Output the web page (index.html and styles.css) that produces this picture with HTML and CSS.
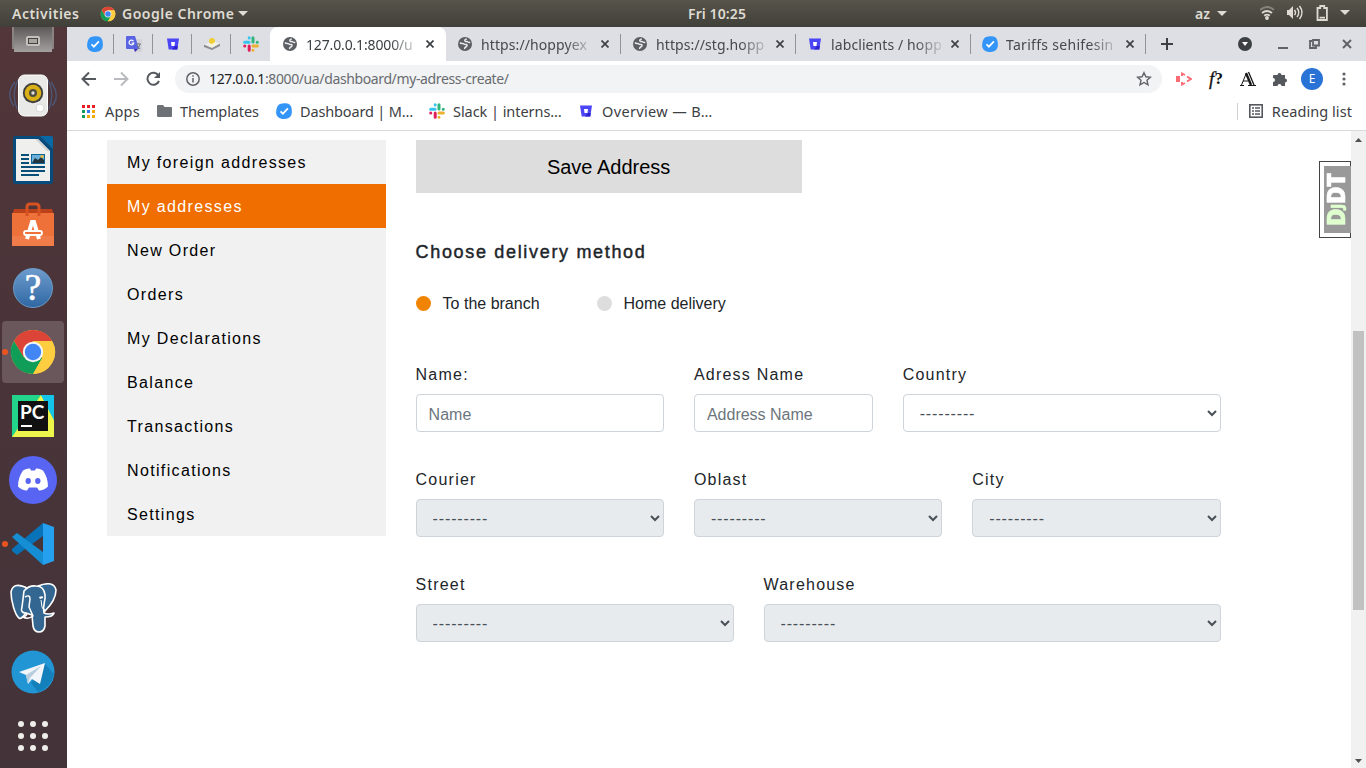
FILE: index.html
```html
<!DOCTYPE html>
<html lang="en">
<head>
<meta charset="utf-8">
<title>My addresses</title>
<link rel="stylesheet" href="styles.css">
</head>
<body>
<svg class="defs" width="0" height="0">
  <symbol id="globe" viewBox="0 0 14 14"><circle cx="7" cy="7" r="7" fill="#5b5e63"/><path d="M2 5.500c1.200 2 2.700.3 3.900 1.500.7.800 1.500.6 2.500.5 1 0 .8 2-.6 2.500-.8.300-.8 1.300-1.800 1.500M8.800 2c-2 .2-2.500 1.200-1.600 2.200.8.800 2 0 2.800.8.800.6 1.300.6 2.200.3" fill="none" stroke="#e9eaed" stroke-width="1.500"/></symbol>
  <symbol id="check" viewBox="0 0 16 16"><path d="M4 .9C7 .2 11 0 13.500 1.400 15.800 3 16 7 15.800 10c-.4 3.600-3 5.800-7.300 6C4 16 .8 14.200.2 10.500-.2 7 1 2 4 .9Z" fill="#3395f7"/><path d="m4.500 8.300 2.400 2.400 5-5.300" fill="none" stroke="#fff" stroke-width="1.700"/></symbol>
  <symbol id="bucket" viewBox="0 0 12 12"><path d="M0 .5h12l-1.700 11H1.700Z" fill="#4b45f5"/><path d="M8 8h2.800l-.5 3.500H5Z" fill="#2d20d0"/><path d="M4 4h4l-.5 4h-3Z" fill="#fff"/></symbol>
  <symbol id="slack" viewBox="0 0 16 16"><g fill="none" stroke-width="3" stroke-linecap="round"><path d="M1.700 6.200h4.300" stroke="#36c5f0"/><path d="M6.200 1.700v.3" stroke="#36c5f0"/><path d="M10 1.700v4.300M14.200 6.200h.1" stroke="#2eb67d"/><path d="M10 9.900h4.400M10 14.200v.1" stroke="#ecb22e"/><path d="M6.200 9.900v4.400M1.700 10h.1" stroke="#e01e5a"/></g></symbol>
  <symbol id="close" viewBox="0 0 8 8"><path d="m.5.500 7 7m0-7-7 7" stroke="#3c4043" stroke-width="1.700"/></symbol>
  <symbol id="chrome" viewBox="0 0 48 48"><circle cx="24" cy="24" r="22" fill="#fbc735"/><path d="M4.900 13A22 22 0 0 1 43.100 13H24L14.500 29Z" fill="#db4437"/><path d="M4.900 13A22 22 0 0 0 24 46L33.500 29.500 14.500 29Z" fill="#0f9d58"/><path d="M24 13h19.100A22 22 0 0 1 24 46l9.500-16.500Z" fill="#ffcd40"/><circle cx="24" cy="24" r="10.200" fill="#f5f5f5"/><circle cx="24" cy="24" r="8.200" fill="#4285f4"/></symbol>
</svg>

<header class="topbar">
  <span class="activities">Activities</span>
  <svg class="app-icon" width="16" height="16"><use href="#chrome"/></svg>
  <span class="app-name">Google Chrome</span>
  <svg width="10" height="6"><path d="M0 0h10L5 5Z" fill="#dfdbd2"/></svg>
  <span class="clock">Fri 10:25</span>
  <span class="lang">az</span>
  <svg class="lang-arrow" width="10" height="6"><path d="M0 0h10L5 5Z" fill="#dfdbd2"/></svg>
  <svg class="status" width="90" height="18" fill="none" stroke="#dfdbd2" stroke-width="1.800"><path d="M0 6q7-6 14 0" stroke="#858279"/><path d="M2 9q5-4 10 0M4.200 11.700q2.800-2 5.600 0"/><circle cx="7" cy="14" r="1" fill="#dfdbd2"/><path d="M27 6h2l4-4v13l-4-4h-2Z" fill="#dfdbd2" stroke="none"/><path d="M34.500 6q2 2.500 0 5M37 4q3.500 4.500 0 9M39.500 2q5 6.500 0 13" stroke-width="1.500"/><path d="M57.500 4h2.700V2h4v2h2.700v12h-9.400ZM59.500 13.600h5.500"/><path d="M80 6h10l-5 5Z" fill="#dfdbd2" stroke="none"/></svg>
</header>

<div class="desktop">
<aside class="dock">
  <div class="slot first"><svg width="44" height="26"><defs><linearGradient id="drawer" x2="0" y2="1"><stop stop-color="#5e5959"/><stop offset="1" stop-color="#a5a0a0"/></linearGradient></defs><path d="M1 0h42v22H1Z" fill="#8b8382"/><path d="M3 0h38v25H3Z" fill="url(#drawer)"/><rect x="15" y="9" width="14" height="10" rx="2" fill="#c4c1bd"/><rect x="17.500" y="11.500" width="9" height="5" fill="#a8a4a0" stroke="#454242"/></svg></div>
  <div class="slot"><svg width="50" height="48" viewBox="0 0 50 48"><path d="M7 10Q-3 22 6 34M43 10q10 14 1 24M10 8Q3 22 9 37M40 8q7 14 1 29" fill="none" stroke="#4c587a" stroke-width="1.300"/><rect x="10.500" y="3" width="29" height="41" rx="6" fill="#e9e9e7" stroke="#fff"/><circle cx="25" cy="21" r="10.200" fill="#3f3f3e"/><circle cx="25" cy="21" r="8.300" fill="#d9b016"/><circle cx="25" cy="21" r="4" fill="#514d3d"/><circle cx="25" cy="21" r="1.700" fill="#ddd"/><circle cx="32" cy="36" r="4" fill="#fff" stroke="#d8d8d8"/></svg></div>
  <div class="slot"><svg width="40" height="48" viewBox="0 0 40 48"><path d="M3 0h24l13 13v32q0 3-3 3H3q-3 0-3-3V3q0-3 3-3Z" fill="#074b7d"/><path d="M27 0h11q2 0 2 2v11Z" fill="#0769a5"/><path d="M3 3h22l12 12v30H3Z" fill="#efefed"/><path d="M25 3v0l12 12h-3L22 3Z" fill="#d2d2d0"/><rect x="18" y="18" width="14" height="10" fill="#0f6598"/><rect x="19" y="19" width="12" height="8" fill="#6bb0d8"/><path d="m19 27 3-5 3 2 3-3 3 3v3Z" fill="#24343c"/><circle cx="29" cy="20.500" r="1.600" fill="#e9b83b"/><path d="M8 19h8M8 23h8M8 27h8M8 31h24M8 35h24M8 39h18" stroke="#085078" stroke-width="2"/></svg></div>
  <div class="slot"><svg width="42" height="46" viewBox="0 0 42 46"><path d="M2 8h38l2 7H0Z" fill="#bb411a"/><path d="M0 12h42v33H0Z" fill="#ed7139"/><path d="M0 35h42v10H0Z" fill="#f07c49"/><path d="M15 15V6q0-3 3-3h6q3 0 3 3v9" fill="none" stroke="#d75220" stroke-width="3"/><path d="m15 38 5-17h2l5 17" fill="none" stroke="#fff" stroke-width="4"/><rect x="12" y="30" width="18" height="4" rx="2" fill="#ed7139" stroke="#fff" stroke-width="1.800"/></svg></div>
  <div class="slot"><div class="help">?</div></div>
  <div class="slot active"><i class="dot"></i><svg width="48" height="48"><use href="#chrome"/></svg></div>
  <div class="slot"><div class="pycharm"><svg class="pc-bg" width="42" height="42"><path d="M0 0h42v42H0Z" fill="#22d58b"/><path d="M0 42 29 0l13 25v17Z" fill="#eef64c"/><path d="M29 0h13v25Z" fill="#15c5e9"/></svg><div class="pc-box">PC<i></i></div></div></div>
  <div class="slot"><svg width="48" height="48" viewBox="0 0 48 48"><circle cx="24" cy="24" r="24" fill="#5865f2"/><path d="M14 14.500q4-2.500 7-2l1 2h4l1-2q3-.5 7 2 5 7 5 16-4 4-9 4l-2-3h-8l-2 3q-5 0-9-4 0-9 5-16Z" fill="#fff"/><ellipse cx="19.200" cy="25" rx="2.700" ry="3" fill="#5865f2"/><ellipse cx="28.800" cy="25" rx="2.700" ry="3" fill="#5865f2"/></svg></div>
  <div class="slot"><i class="dot"></i><svg width="42" height="42" viewBox="0 0 42 42"><path d="M31 0v13L5 32 0 28v-2Z" fill="#0873b8"/><path d="m0 14 5-4 26 19v13Z" fill="#168ed3"/><path d="m31 0 11 4v34l-11 4Z" fill="#25a0ee"/></svg></div>
  <div class="slot"><svg width="48" height="50" viewBox="0 0 48 50"><g fill="#336791" stroke="#fff" stroke-width="1.600" stroke-linejoin="round"><path d="M16 4Q4-1 2 9c0 9 4 23 8 26 3 2 5-3 7-5l3-23Z"/><path d="M29 3Q45-3 47 7c0 8-6 16-11 21-4-3-5-18-7-25Z"/><path d="M15 8Q20 2 27 3q8 0 9 9c1 6-3 10-1 18q4 2 10 0c-1 4-6 4-9 4v9q-1 6-6 6t-6-6l-1-11-6-2q-6 0-4-6Z"/></g><path d="M16 14q5-3 5 2l-1 8 4 9q-5 4-10 1 4-1 4-4" fill="none" stroke="#fff" stroke-width="1.500"/><path d="M30 14q5-2 4 1l-3 1Z" fill="#fff"/><path d="M32 17q0 8 4 12" fill="none" stroke="#fff"/></svg></div>
  <div class="slot"><svg width="44" height="44" viewBox="0 0 44 44"><circle cx="22" cy="22" r="21.500" fill="#2296d5"/><path d="m20 33 14-19 9 10q-3 14-16 18Z" fill="#1480bb"/><path d="m8 22 26-9-5 21-8-5-4 5-2-9Z" fill="#f2f6fa"/><path d="m15 25 15-9-11 12-2 6Z" fill="#b7cddd"/></svg></div>
  <div class="slot"><svg width="32" height="32" fill="#efeeea"><circle cx="4" cy="4" r="3"/><circle cx="16" cy="4" r="3"/><circle cx="28" cy="4" r="3"/><circle cx="4" cy="16" r="3"/><circle cx="16" cy="16" r="3"/><circle cx="28" cy="16" r="3"/><circle cx="4" cy="28" r="3"/><circle cx="16" cy="28" r="3"/><circle cx="28" cy="28" r="3"/></svg></div>
</aside>

<div class="browser">
  <nav class="tabs">
    <div class="pin"><svg width="16" height="16"><use href="#check"/></svg></div>
    <div class="pin"><svg width="16" height="16"><path d="M6 3h10v13H9Z" fill="#d4d4d8"/><path d="M1 0h8l4 13H1Q0 13 0 12V1Q0 0 1 0Z" fill="#5964e3"/><path d="M7.500 5.200A2.400 2.400 0 1 0 7.800 7H5.500" fill="none" stroke="#fff" stroke-width="1.200"/><path d="M10 8h5m-3-1v1m2 0q-1 4-3 5m0-4 3 4" fill="none" stroke="#757b85"/><path d="M8 13h4l-3 3Z" fill="#3d28b5"/></svg></div>
    <div class="pin"><svg width="12" height="12"><use href="#bucket"/></svg></div>
    <div class="pin"><svg width="16" height="14"><path d="m0 8 8-3 8 2v2l-8 4-8-3Z" fill="#8d8d92"/><path d="m0 7.500 8-3 8 2-8 4.500Z" fill="#efefef"/><circle cx="8" cy="4" r="3" fill="#efce31"/><path d="m5 9 6-4 2 1-6 4Z" fill="#fbf6cf"/></svg></div>
    <div class="pin last"><svg width="16" height="16"><use href="#slack"/></svg></div>
    <div class="tab current"><svg width="14" height="14"><use href="#globe"/></svg><span class="title">127.0.0.1:8000/u</span><svg width="8" height="8"><use href="#close"/></svg></div>
    <div class="tab"><svg width="14" height="14"><use href="#globe"/></svg><span class="title">https://hoppyex</span><svg width="8" height="8"><use href="#close"/></svg></div>
    <div class="tab"><svg width="14" height="14"><use href="#globe"/></svg><span class="title">https://stg.hopp</span><svg width="8" height="8"><use href="#close"/></svg></div>
    <div class="tab"><svg class="small" width="12" height="12"><use href="#bucket"/></svg><span class="title">labclients / hopp</span><svg width="8" height="8"><use href="#close"/></svg></div>
    <div class="tab tariff"><svg class="big" width="16" height="16"><use href="#check"/></svg><span class="title">Tariffs sehifesin</span><svg width="8" height="8"><use href="#close"/></svg></div>
    <svg class="plus" width="12" height="12"><path d="M6 0v12M0 6h12" stroke="#3c4043" stroke-width="2"/></svg>
    <svg class="window-ctl" width="116" height="16"><circle cx="7" cy="8" r="7" fill="#3c4043"/><path d="M4 6h6l-3 4Z" fill="#fff"/><path d="M40 12h10" stroke="#5f6368" stroke-width="2"/><path d="M74 5h-2v7h6v-1.500M75 4h6v5.500h-6Z" fill="none" stroke="#5f6368" stroke-width="1.800"/><path d="m105 4 8 8m0-8-8 8" stroke="#5f6368" stroke-width="2"/></svg>
  </nav>

  <div class="toolbar">
    <svg class="navs" width="82" height="18" fill="none" stroke="#55585d" stroke-width="2"><path d="M15 9H2m6-6.500L1.500 9 8 15.500"/><path d="M33 9h13m-6-6.500L46.500 9 40 15.500" stroke="#b8babd"/><path d="M77.500 5.500A6 6 0 1 0 78 11"/><path d="M79 2v6h-6Z" fill="#55585d" stroke="none"/></svg>
    <div class="omnibox">
      <svg width="14" height="14" fill="none" stroke="#5f6368" stroke-width="1.500"><circle cx="7" cy="7" r="6.200"/><path d="M7 6v4.500M7 3.200v1.500"/></svg>
      <span class="url"><b>127.0.0.1</b>:8000/ua/dashboard/my-adress-create/</span>
      <svg width="16" height="16" viewBox="0 0 16 16"><path d="m8 1.700 1.900 4.100 4.500.5-3.400 3 1 4.500-4-2.300-4 2.300 1-4.500-3.400-3 4.500-.5Z" fill="none" stroke="#5f6368" stroke-width="1.400"/></svg>
    </div>
    <div class="ext"><svg width="16" height="14"><path d="M0 4h4v6H0Z" fill="#fa6b73"/><path d="M6 4V1.500L9 3M11 4.500 15 7l-4 2.500M9 11l-3 1.500V10" fill="none" stroke="#fa6b73" stroke-width="1.900"/></svg></div>
    <div class="ext fq"><i>f</i>?</div>
    <div class="ext"><svg width="16" height="16" fill="none" stroke="#181818"><path d="M1.500 14 6 3M3 10h5" stroke-width="1"/><path d="m6 2 5 12" stroke-width="2.400"/><path d="m8.500 1 5.500 13" stroke-width="1.300"/><path d="M0 14.500h4m4 0h8" stroke-width="1"/></svg></div>
    <div class="ext"><svg width="16" height="16" fill="#55585d"><path d="M2 4h3.500a2 2 0 1 1 4 0H13v3.500a2 2 0 1 1 0 4V15H9.500a2 2 0 0 0-4 0H1v-4a2 2 0 0 0 0-4V5q0-1 1-1Z"/></svg></div>
    <div class="ext"><span class="avatar">E</span></div>
    <div class="ext"><svg width="4" height="14" fill="#5f6368"><circle cx="2" cy="2" r="1.600"/><circle cx="2" cy="7" r="1.600"/><circle cx="2" cy="12" r="1.600"/></svg></div>
  </div>

  <div class="bookmarks">
    <svg class="apps-icon" width="13" height="13"><path d="M0 0h3v3H0ZM5 0h3v3H5ZM10 0h3v3h-3Z" fill="#ea1c24"/><path d="M0 5h3v3H0ZM0 10h3v3H0Z" fill="#0f9d58"/><path d="M5 5h3v3H5Z" fill="#3978f0"/><path d="M10 5h3v3h-3ZM5 10h3v3H5ZM10 10h3v3h-3Z" fill="#f4a80c"/></svg>
    <span class="bm apps">Apps</span>
    <svg class="folder" width="15" height="12"><path d="M1 0h5l1.500 2H14q1 0 1 1v8q0 1-1 1H1q-1 0-1-1V1q0-1 1-1Z" fill="#6e7175"/></svg>
    <span class="bm templates">Themplates</span>
    <svg class="bm-icon" width="16" height="16"><use href="#check"/></svg>
    <span class="bm dash">Dashboard | M…</span>
    <svg class="bm-icon" width="16" height="16"><use href="#slack"/></svg>
    <span class="bm slackname">Slack | interns…</span>
    <svg class="bucket-icon" width="12" height="12"><use href="#bucket"/></svg>
    <span class="bm over">Overview — B…</span>
    <div class="reading"><svg width="14" height="14"><rect x=".8" y=".8" width="12.400" height="12.400" fill="none" stroke="#55585d" stroke-width="1.600"/><path d="M3 4h2M3 7h2M3 10h2M6 4h5M6 7h5M6 10h5" stroke="#55585d" stroke-width="1.400"/></svg><span class="bm">Reading list</span></div>
  </div>

  <div class="viewport">
    <ul class="menu">
      <li>My foreign addresses</li>
      <li class="selected">My addresses</li>
      <li>New Order</li>
      <li>Orders</li>
      <li>My Declarations</li>
      <li>Balance</li>
      <li>Transactions</li>
      <li>Notifications</li>
      <li>Settings</li>
    </ul>
    <main class="main">
      <button class="save">Save Address</button>
      <h2>Choose delivery method</h2>
      <div class="methods">
        <span class="method chosen">To the branch</span>
        <span class="method">Home delivery</span>
      </div>
      <form class="form">
        <label class="w4">Name:<input placeholder="Name"></label>
        <label class="w3">Adress Name<input placeholder="Address Name"></label>
        <label class="w5">Country<select><option>---------</option></select></label>
        <label class="w4">Courier<select disabled><option>---------</option></select></label>
        <label class="w4">Oblast<select disabled><option>---------</option></select></label>
        <label class="w4">City<select disabled><option>---------</option></select></label>
        <label class="w5">Street<select disabled><option>---------</option></select></label>
        <label class="w7">Warehouse<select disabled><option>---------</option></select></label>
      </form>
    </main>
    <div class="djdt"><div class="handle"><span>D<small>J</small></span>DT</div></div>
    <div class="scroll"><svg width="7" height="4"><path d="M0 4h7L3.500 0Z" fill="#505050"/></svg><div class="thumb"></div><svg width="7" height="4"><path d="M0 0h7L3.500 4Z" fill="#505050"/></svg></div>
  </div>
</div>
</div>
</body>
</html>
```

FILE: styles.css
```css
* { box-sizing: border-box; }
body { margin: 0; width: 1366px; height: 768px; overflow: hidden; background: #fff; font-family: "Noto Sans", sans-serif; font-size: 14px; }
svg { display: block; flex: none; }
.defs { position: absolute; }

/* System bar */
.topbar { display: flex; align-items: center; height: 27px; padding-left: 12px; background: linear-gradient(#57544b, #403f39); color: #dfdbd2; font-weight: 600; white-space: nowrap; }
.activities { width: 88px; letter-spacing: .5px; }
.app-icon { margin-right: 6px; }
.app-name { width: 116px; letter-spacing: .5px; }
.clock { width: 61px; margin-left: 440px; letter-spacing: .1px; }
.lang { width: 22px; margin-left: 446px; }
.lang-arrow { margin-right: 33px; }
.status { margin-top: -1px; }

/* Dock */
.desktop { display: flex; height: 741px; }
.dock { width: 67px; background: linear-gradient(#523639, #493439 45%, #43343a); overflow: hidden; }
.slot { position: relative; height: 64px; width: 66px; display: flex; align-items: center; justify-content: center; }
.slot.first { height: 37px; align-items: flex-start; }
.slot.active::before { content: ""; position: absolute; inset: 1px 2px; border-radius: 4px; background: #6a575c; }
.slot.active svg { position: relative; }
.dot { position: absolute; left: 2px; top: 29px; width: 6px; height: 6px; border-radius: 50%; background: #e95420; z-index: 1; }
.help { width: 40px; height: 40px; border-radius: 50%; background: linear-gradient(#6d9bcd, #3068a3); border: 1px solid #6a9bc8; color: #fff; font: 37px/38px "Liberation Serif", serif; -webkit-text-stroke: .6px #fff; text-align: center; }
.pycharm { width: 42px; height: 42px; display: grid; place-items: center; position: relative; }
.pc-bg { position: absolute; inset: 0; }
.pc-box { position: relative; width: 30px; height: 30px; background: #111; color: #fff; font: bold 19px/21px Lato, sans-serif; padding-left: 2px; }
.pc-box i { display: block; width: 11px; height: 2px; margin: 3px 0 0 1px; background: #fff; }

/* Tab strip */
.browser { width: 1299px; }
.tabs { height: 34px; display: flex; background: #dedfe5; padding-left: 8px; }
.pin { display: flex; align-items: center; justify-content: center; width: 39px; position: relative; }
.pin::after, .tab::after { content: ""; position: absolute; right: 0; top: 7px; width: 1px; height: 20px; background: #929398; }
.pin.last::after, .tab.current::after { display: none; }
.tab { position: relative; display: flex; align-items: center; width: 175px; padding-left: 12px; color: #45484c; }
.tab.current { width: 176px; padding-left: 13px; background: #fff; border-radius: 8px 8px 0 0; color: #3c4043; }
.tab .title { width: 112px; margin: 0 8px 0 9px; overflow: hidden; white-space: nowrap; font-size: 14px; letter-spacing: .1px; mask-image: linear-gradient(90deg, #000 75%, transparent 103%); }
.tab .small { margin: 0 1px; }
.tab .big { margin: 0 -1px; }
.tab.current .title { letter-spacing: -.15px; }
.tab.tariff .title { letter-spacing: .3px; }
.plus { margin: 11px 0 0 15px; }
.window-ctl { margin: 9px 0 0 65px; }

/* Address bar */
.toolbar { display: flex; align-items: center; height: 36px; padding-left: 14px; }
.navs { margin-right: 12px; }
.omnibox { width: 987px; height: 28px; margin-right: 6px; padding: 0 10px 0 11px; border-radius: 14px; background: #f1f3f4; display: flex; align-items: center; color: #686b70; }
.url { flex: 1; margin: -2px 0 0 9px; font-size: 14px; letter-spacing: -.38px; white-space: nowrap; }
.url b { font-weight: 400; color: #202124; }
.ext { width: 32px; display: flex; align-items: center; justify-content: center; color: #111; }
.fq { font: bold 17px "Liberation Serif", serif; }
.fq i { font-weight: 400; font-size: 19px; -webkit-text-stroke: .3px #111; }
.avatar { width: 22px; height: 22px; border-radius: 50%; background: #2a73d6; color: #fff; font-size: 12px; line-height: 22px; text-align: center; }

/* Bookmarks */
.bookmarks { display: flex; align-items: center; height: 34px; padding: 0 14px 5px 15px; border-bottom: 1px solid #d9d9de; color: #3c4043; }
.bm { margin-top: -1px; font-size: 14.500px; white-space: nowrap; }
.apps { width: 52px; margin-left: 10px; letter-spacing: .2px; }
.templates { width: 96px; margin-left: 8px; letter-spacing: -.1px; }
.bm-icon { margin-right: 8px; }
.dash { width: 129px; letter-spacing: -.15px; }
.slackname { width: 127px; letter-spacing: -.05px; }
.bucket-icon { margin-right: 10px; }
.over { width: 120px; letter-spacing: .35px; }
.reading { display: flex; align-items: center; gap: 9px; height: 17px; margin-left: auto; padding-left: 11px; border-left: 1px solid #cfd0d3; }
.reading .bm { letter-spacing: .07px; }

/* Page */
.viewport { position: relative; display: flex; height: 637px; padding: 9px 0 0 40px; font-family: "Liberation Sans", Arial, sans-serif; font-size: 16px; color: #212529; }
.menu { list-style: none; width: 279px; height: 396px; margin: 0 29.600px 0 0; padding: 0; background: #f1f1f1; color: #000; letter-spacing: 1.350px; }
.menu li { height: 44px; padding: 1px 0 0 20px; line-height: 44px; }
.menu .selected { background: #f06d00; color: #fff; }
.main { width: 805px; }
.save { display: block; width: 386px; height: 53px; padding: 2px 0 0; border: 0; background: #ddd; color: #000; font: 20px "Liberation Sans", sans-serif; }
h2 { margin: 48px 0 0; font-size: 18px; line-height: 22px; font-weight: 400; letter-spacing: 1.670px; -webkit-text-stroke: .45px #212529; }
.methods { display: flex; gap: 57px; margin-top: 28px; line-height: 24px; }
.method { display: flex; align-items: center; gap: 12px; padding-top: 1px; }
.method::before { content: ""; width: 15px; height: 15px; margin-top: -1px; border-radius: 50%; background: #ddd; }
.method.chosen::before { background: #f08400; }
.form { display: grid; grid-template-columns: repeat(12, minmax(0, 1fr)); gap: 35px 30px; margin-top: 47px; }
.form label { line-height: 24px; letter-spacing: 1.220px; }
.form input, .form select { display: block; width: 100%; height: 38px; margin-top: 7px; padding: 6px 12px; border: 1px solid #ced4da; border-radius: 4px; background-color: #fff; color: #495057; font: 16px/24px "Liberation Sans", sans-serif; }
.form input { padding-top: 8px; padding-bottom: 4px; }
.form select { letter-spacing: .850px; }
.form select:disabled { background-color: #e7ebee; opacity: 1; }
.form input::placeholder { color: #6c757d; }
.form label { height: 70px; }
.w3 { grid-column: span 3; }
.w4 { grid-column: span 4; }
.w5 { grid-column: span 5; }
.w7 { grid-column: span 7; }

/* Debug toolbar handle, floating over the page */
.djdt { position: absolute; right: 15px; top: 30px; width: 32px; height: 77px; padding: 4px 0 4px 4px; background: #fff; border: 1px solid #444; }
.handle { width: 27px; height: 67px; background: #999; color: #fff; writing-mode: vertical-rl; transform: rotate(180deg); font: 800 24px/24px "Open Sans", sans-serif; letter-spacing: -.5px; text-align: center; -webkit-text-stroke: .5px; }
.handle span { color: #dfffcf; }
.handle small { font-size: 15px; }
.scroll { width: 15px; height: 637px; margin: -9px 0 0 auto; padding: 7px 0 5px; background: #f1f1f1; display: flex; flex-direction: column; align-items: center; }
.thumb { width: 11px; height: 279px; margin: 189px 0 auto; background: #c1c1c1; }
```
